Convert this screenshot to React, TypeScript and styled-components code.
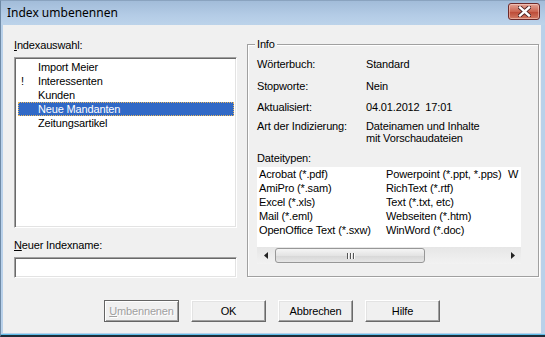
import styled, { createGlobalStyle } from "styled-components";

const GlobalStyle = createGlobalStyle`
  html, body {
    margin: 0;
    padding: 0;
    background: #b9d1ea;
  }
  body {
    font-family: "Liberation Sans", Arial, sans-serif;
    font-size: 11px;
    letter-spacing: -0.15px;
    color: #000;
  }
`;

const indexItems = [
  { mark: "", name: "Import Meier" },
  { mark: "!", name: "Interessenten" },
  { mark: "", name: "Kunden" },
  { mark: "", name: "Neue Mandanten" },
  { mark: "", name: "Zeitungsartikel" },
];

const fileColumns = [
  ["Acrobat (*.pdf)", "AmiPro (*.sam)", "Excel (*.xls)", "Mail (*.eml)", "OpenOffice Text (*.sxw)"],
  ["Powerpoint (*.ppt, *.pps)", "RichText (*.rtf)", "Text (*.txt, etc)", "Webseiten (*.htm)", "WinWord (*.doc)"],
  ["W"],
];

function CloseGlyph() {
  return (
    <svg width="13" height="11" viewBox="0 0 13 11">
      <path d="M2 1.5 L11 9.5 M11 1.5 L2 9.5" stroke="#4a2020" strokeWidth="4.2" strokeLinecap="square" />
      <path d="M2 1.5 L11 9.5 M11 1.5 L2 9.5" stroke="#ffffff" strokeWidth="2.4" strokeLinecap="square" />
    </svg>
  );
}

function Arrow({ dir }: { dir: "left" | "right" }) {
  return (
    <svg width="4" height="7" viewBox="0 0 4 7">
      {dir === "left" ? <path d="M4 0 L0 3.5 L4 7 Z" fill="#222" /> : <path d="M0 0 L4 3.5 L0 7 Z" fill="#222" />}
    </svg>
  );
}

function App() {
  return (
    <>
      <GlobalStyle />
      <Window>
        <TitleBar>
          <TitleText>Index umbenennen</TitleText>
          <CloseButton>
            <CloseGlyph />
          </CloseButton>
        </TitleBar>
        <Client>
          <TopSection>
            <LeftColumn>
              <FieldLabel>
                <u>I</u>ndexauswahl:
              </FieldLabel>
              <ListBox>
                {indexItems.map((item, i) => (
                  <ListRow key={item.name} $selected={i === 3}>
                    <Mark>{item.mark}</Mark>
                    <span>{item.name}</span>
                  </ListRow>
                ))}
              </ListBox>
              <FieldLabel $gap={11}>
                <u>N</u>euer Indexname:
              </FieldLabel>
              <TextBox />
            </LeftColumn>
            <GroupBox>
              <Legend>Info</Legend>
              <InfoRow $gap={0}>
                <InfoKey>Wörterbuch:</InfoKey>
                <InfoValue>Standard</InfoValue>
              </InfoRow>
              <InfoRow $gap={9}>
                <InfoKey>Stopworte:</InfoKey>
                <InfoValue>Nein</InfoValue>
              </InfoRow>
              <InfoRow $gap={8}>
                <InfoKey>Aktualisiert:</InfoKey>
                <InfoValue>04.01.2012&nbsp;&nbsp;17:01</InfoValue>
              </InfoRow>
              <InfoRow $gap={6}>
                <InfoKey>Art der Indizierung:</InfoKey>
                <InfoValue $multi>
                  Dateinamen und Inhalte
                  <br />
                  mit Vorschaudateien
                </InfoValue>
              </InfoRow>
              <SubLabel>Dateitypen:</SubLabel>
              <FileList>
                <FileGrid>
                  {fileColumns.map((col, c) => (
                    <FileColumn key={c} $width={c === 0 ? 127 : 122}>
                      {col.map((f) => (
                        <FileItem key={f}>{f}</FileItem>
                      ))}
                    </FileColumn>
                  ))}
                </FileGrid>
                <ScrollBar>
                  <ScrollArrow>
                    <Arrow dir="left" />
                  </ScrollArrow>
                  <ScrollTrack>
                    <Thumb>
                      <Grip />
                      <Grip />
                      <Grip />
                    </Thumb>
                  </ScrollTrack>
                  <ScrollArrow>
                    <Arrow dir="right" />
                  </ScrollArrow>
                </ScrollBar>
              </FileList>
            </GroupBox>
          </TopSection>
          <ButtonRow>
            <DialogButton $disabled>
              <u>U</u>mbennenen
            </DialogButton>
            <DialogButton>OK</DialogButton>
            <DialogButton>Abbrechen</DialogButton>
            <DialogButton>Hilfe</DialogButton>
          </ButtonRow>
        </Client>
      </Window>
    </>
  );
}

const Window = styled.div`
  width: 545px;
  height: 337px;
  display: flex;
  flex-direction: column;
  box-sizing: border-box;
  background: #b9d1ea;
  border-left: 1px solid #6f8aa6;
  border-top: 1px solid #8aa3bf;
  border-bottom: 2px solid #1f2c38;
  box-shadow: inset 0 -1px 0 #5ebde9;
  overflow: hidden;
`;

const TitleBar = styled.div`
  height: 24px;
  flex: none;
  display: flex;
  align-items: center;
  justify-content: space-between;
  padding: 0 5px 0 6px;
  background: linear-gradient(#a2bcd9, #b4cce6 60%, #bcd3ea);
`;

const TitleText = styled.div`
  font-family: "Noto Sans", "Open Sans", sans-serif;
  font-size: 12px;
  letter-spacing: 0;
  color: #000;
  margin-top: -2px;
`;

const CloseButton = styled.div`
  width: 30px;
  height: 15px;
  margin-top: -3px;
  display: flex;
  align-items: center;
  justify-content: center;
  border: 1px solid #6d2a2a;
  border-radius: 3px;
  background: linear-gradient(#e2a496, #cc6652 50%, #bc4834 51%, #d27a64);
  box-shadow: inset 0 0 0 1px rgba(255, 220, 210, 0.5);
`;

const Client = styled.div`
  flex: 1;
  margin: 0 4px 2px 2px;
  background: #f0f0f0;
  display: flex;
  flex-direction: column;
`;

const TopSection = styled.div`
  display: flex;
  align-items: flex-start;
  padding: 14px 0 0 11px;
`;

const LeftColumn = styled.div`
  width: 223px;
  display: flex;
  flex-direction: column;
`;

const FieldLabel = styled.div<{ $gap?: number }>`
  line-height: 13px;
  margin-top: ${(p) => p.$gap ?? 0}px;
  margin-bottom: 5px;
  white-space: nowrap;
`;

const sunken = `
  border: 1px solid;
  border-color: #a0a0a0 #ffffff #ffffff #a0a0a0;
  box-shadow: inset 1px 1px 0 #696969, inset -1px -1px 0 #e3e3e3;
  background: #ffffff;
  box-sizing: border-box;
`;

const ListBox = styled.div`
  ${sunken}
  height: 171px;
  padding: 2px 2px;
`;

const ListRow = styled.div<{ $selected?: boolean }>`
  height: 14px;
  line-height: 14px;
  display: flex;
  white-space: nowrap;
  margin-left: 1px;
  background: ${(p) => (p.$selected ? "#3169c6" : "transparent")};
  color: ${(p) => (p.$selected ? "#ffffff" : "#000000")};
  outline: ${(p) => (p.$selected ? "1px dotted #e8b860" : "none")};
  outline-offset: -1px;
`;

const Mark = styled.span`
  width: 20px;
  padding-left: 3px;
  box-sizing: border-box;
  flex: none;
`;

const TextBox = styled.div`
  ${sunken}
  height: 21px;
`;

const GroupBox = styled.div`
  position: relative;
  width: 292px;
  height: 233px;
  margin: 5px 0 0 10px;
  box-sizing: border-box;
  border: 1px solid #a0a0a0;
  box-shadow: 1px 1px 0 #ffffff, inset 1px 1px 0 #ffffff;
  padding: 13px 9px 0 9px;
  display: flex;
  flex-direction: column;
`;

const Legend = styled.div`
  position: absolute;
  top: -7px;
  left: 7px;
  padding: 0 2px;
  line-height: 13px;
  background: #f0f0f0;
`;

const InfoRow = styled.div<{ $gap: number }>`
  display: flex;
  margin-top: ${(p) => p.$gap}px;
  line-height: 13px;
`;

const InfoKey = styled.div`
  width: 109px;
  flex: none;
  white-space: nowrap;
`;

const InfoValue = styled.div<{ $multi?: boolean }>`
  white-space: nowrap;
  line-height: ${(p) => (p.$multi ? "12px" : "13px")};
`;

const SubLabel = styled.div`
  margin-top: 8px;
  line-height: 13px;
`;

const FileList = styled.div`
  margin-top: 2px;
  width: 264px;
  height: 97px;
  background: #ffffff;
  display: flex;
  flex-direction: column;
  overflow: hidden;
`;

const FileGrid = styled.div`
  flex: 1;
  display: flex;
  padding-left: 2px;
  overflow: hidden;
`;

const FileColumn = styled.div<{ $width: number }>`
  width: ${(p) => p.$width}px;
  flex: none;
  display: flex;
  flex-direction: column;
`;

const FileItem = styled.div`
  height: 14px;
  line-height: 14px;
  white-space: nowrap;
`;

const ScrollBar = styled.div`
  height: 17px;
  flex: none;
  display: flex;
  align-items: center;
  background: linear-gradient(#e6e6e6, #f2f2f2);
`;

const ScrollArrow = styled.div`
  width: 17px;
  height: 17px;
  flex: none;
  display: flex;
  align-items: center;
  justify-content: center;
`;

const ScrollTrack = styled.div`
  flex: 1;
  height: 15px;
  display: flex;
  align-items: center;
`;

const Thumb = styled.div`
  width: 150px;
  height: 15px;
  margin-left: 1px;
  box-sizing: border-box;
  border: 1px solid #979797;
  border-radius: 3px;
  background: linear-gradient(#f5f5f5, #e4e4e4 50%, #d6d6d6 51%, #e6e6e6);
  display: flex;
  align-items: center;
  justify-content: center;
  gap: 2px;
`;

const Grip = styled.div`
  width: 1px;
  height: 6px;
  background: #555;
  box-shadow: 1px 0 0 #fafafa;
`;

const ButtonRow = styled.div`
  display: flex;
  justify-content: center;
  gap: 12px;
  margin-top: 22px;
`;

const DialogButton = styled.div<{ $disabled?: boolean }>`
  width: 75px;
  height: 22px;
  box-sizing: border-box;
  display: flex;
  align-items: center;
  justify-content: center;
  background: #f0f0f0;
  border: 1px solid;
  border-color: ${(p) => (p.$disabled ? "#646464" : "#ffffff #696969 #696969 #ffffff")};
  box-shadow: ${(p) =>
    p.$disabled
      ? "inset 1px 1px 0 #ffffff, inset -1px -1px 0 #a0a0a0"
      : "inset -1px -1px 0 #a0a0a0, inset 1px 1px 0 #e3e3e3"};
  color: ${(p) => (p.$disabled ? "#a0a0a0" : "#000000")};
  text-shadow: ${(p) => (p.$disabled ? "1px 1px 0 #ffffff" : "none")};
`;

export default App;
